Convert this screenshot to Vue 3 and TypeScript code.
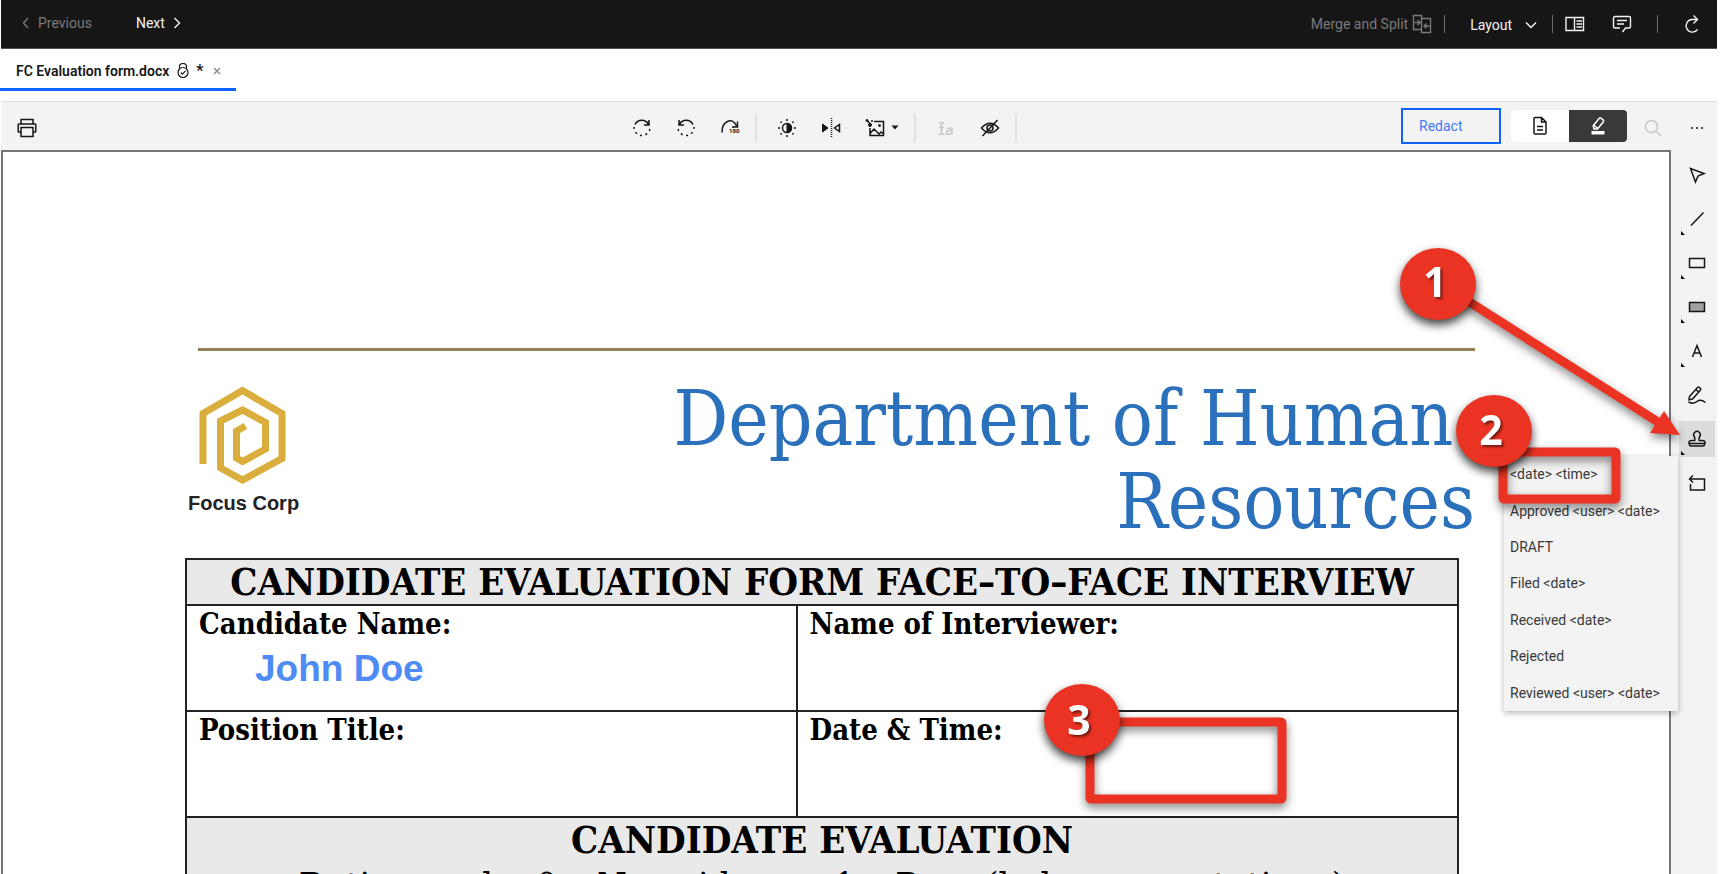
<script setup lang="ts">
import { ref } from 'vue'

interface Tool { id: string; label: string; flyout: boolean }

const tools: Tool[] = [
  { id: 'select', label: 'Select', flyout: false },
  { id: 'line', label: 'Line', flyout: true },
  { id: 'rect', label: 'Rectangle', flyout: true },
  { id: 'fill', label: 'Filled rectangle', flyout: true },
  { id: 'text', label: 'Text', flyout: true },
  { id: 'draw', label: 'Freehand', flyout: false },
  { id: 'stamp', label: 'Stamp', flyout: true },
  { id: 'undo', label: 'Undo', flyout: false },
]

const stamps: string[] = [
  '<date> <time>',
  'Approved <user> <date>',
  'DRAFT',
  'Filed <date>',
  'Received <date>',
  'Rejected',
  'Reviewed <user> <date>',
]

const active = ref('stamp')
</script>

<template>
  <div class="app">
    <header class="topbar">
      <button class="nav dim" disabled>
        <svg width="8" height="12" viewBox="0 0 8 12"><path d="M6 1 1.500 6 6 11" /></svg>
        <span>Previous</span>
      </button>
      <button class="nav next">
        <span>Next</span>
        <svg width="8" height="12" viewBox="0 0 8 12"><path d="M1.500 1 6.500 6l-5 5" /></svg>
      </button>
      <div class="topright">
        <button class="merge dim" disabled>
          <span>Merge and Split</span>
          <svg width="20" height="20" viewBox="0 0 20 20"><path d="M9.500 15.500H1.500v-14h8v3M9.500 4.500h9v14h-9zM2.500 8.500h5M5.500 6l2.500 2.500L5.500 11M17.500 12h-5M14.500 9.500 12 12l2.500 2.500" /></svg>
        </button>
        <i class="bar"></i>
        <button class="layout">
          <span>Layout</span>
          <svg width="12" height="8" viewBox="0 0 12 8"><path d="M1 1.500 6 6.500l5-5" /></svg>
        </button>
        <i class="bar"></i>
        <button class="panel" aria-label="Side panel">
          <svg width="20" height="16" viewBox="0 0 20 16"><path d="M1 1.500h17.500v13H1zM9.500 1.500v13M11.500 5H17M11.500 8H17M11.500 11H17" /></svg>
        </button>
        <button class="comment" aria-label="Comments">
          <svg width="20" height="18" viewBox="0 0 20 18"><path d="M8 13H3q-1.500 0-1.500-1.500V3Q1.500 1.500 3 1.500h14q1.500 0 1.500 1.500v8.500Q18.500 13 17 13h-3.500L10.500 17M5 5.500h10M5 9h7" /></svg>
        </button>
        <i class="bar"></i>
        <button class="redo" aria-label="Refresh">
          <svg width="16" height="20" viewBox="0 0 16 20"><path d="M13.500 15.500A6.300 6.300 0 1 1 8 5.500h5M9.500 1.500l4 4-4 4" /></svg>
        </button>
      </div>
    </header>

    <nav class="tabs">
      <div class="tab">
        <a href="#doc">FC Evaluation form.docx</a>
        <svg class="lock" width="12" height="16" viewBox="0 0 12 16"><circle cx="6" cy="9.500" r="5" /><path d="M2.500 5.500V4a3.500 3.500 0 0 1 7 0v1.500M3.800 9.500l1.700 1.600 3-3.200" /></svg>
        <span class="star">*</span>
        <button class="close" aria-label="Close tab"><svg width="8" height="8" viewBox="0 0 8 8"><path d="M1 1l6 6M7 1 1 7" /></svg></button>
      </div>
    </nav>

    <div class="toolbar">
      <div class="left">
        <button aria-label="Print">
          <svg width="20" height="20" viewBox="0 0 20 20"><path d="M4 6V1.500h12V6M4 14H2q-.8 0-.8-.8V6.800Q1.200 6 2 6h16q.8 0 .8.8v6.400q0 .8-.8.8h-2M4 9.500h12v9H4z" /></svg>
        </button>
      </div>
      <div class="middle">
        <button aria-label="Rotate clockwise">
          <svg width="20" height="20" viewBox="0 0 20 20"><path d="M3 6.500A7.500 7.500 0 0 1 16.500 6.500M17 2v5h-5" /><path stroke-dasharray="2 3.500" d="M2 9a8 8 0 1 0 16 1" /></svg>
        </button>
        <button aria-label="Rotate counterclockwise">
          <svg width="20" height="20" viewBox="0 0 20 20"><path d="M17 6.500A7.500 7.500 0 0 0 3.500 6.500M3 2v5h5" /><path stroke-dasharray="2 3.500" d="M18 9a8 8 0 1 1-16 1" /></svg>
        </button>
        <button aria-label="Rotate 180 degrees">
          <svg width="20" height="20" viewBox="0 0 20 20"><path d="M2 14.500C2 2 13-1 16.500 8M17.500 3.500V9H12" /><text x="9" y="15">180</text></svg>
        </button>
        <i class="sep"></i>
        <button aria-label="Brightness">
          <svg width="20" height="20" viewBox="0 0 20 20"><circle cx="10" cy="10" r="4.500" /><path class="solid" d="M10 5.500a4.500 4.500 0 0 1 0 9z" /><path d="M10 1v2M10 17v2M1 10h2M17 10h2M3.500 3.500l1.200 1.200M15.300 15.300l1.200 1.200M3.500 16.500l1.200-1.200M15.300 4.700l1.200-1.200" /></svg>
        </button>
        <button aria-label="Mirror">
          <svg width="20" height="20" viewBox="0 0 20 20"><path class="solid" d="M1.500 6v8L7 10z" /><path d="M18.500 6.500v7L13.500 10z" /><path stroke-dasharray="1 1" d="M10.500 0v20" /></svg>
        </button>
        <button class="wide" aria-label="Enhance image">
          <svg width="20" height="20" viewBox="0 0 20 20"><path d="M9 3.500h9.500v14H5V10M5.500 15 9 11l5 5 2-2 2.500 2M6 6.500 2.500 3" /><circle class="solid" cx="14.500" cy="7.500" r="1" /><circle class="solid" cx="2" cy="2.500" r="1" /><circle class="solid" cx="5" cy="7" r="1.500" /><circle class="solid" cx="7" cy="3" r=".6" /></svg>
          <svg width="8" height="5" viewBox="0 0 8 5"><path class="solid bare" d="M.5.5h7L4 4.500z" /></svg>
        </button>
        <i class="sep"></i>
        <button class="faint" aria-label="Text select" disabled>
          <svg width="20" height="20" viewBox="0 0 20 20"><path d="M2.500 4.500Q5 4.500 5.500 6 6 4.500 8.500 4.500M2.500 16.500Q5 16.500 5.500 15 6 16.500 8.500 16.500M5.500 6v9M3 9.500h5M11 10.500q3-1 5 0v5.500M16 12.500h-3.500q-2 0-2 2t2 2q2 0 3.500-2" /></svg>
        </button>
        <button aria-label="Hide annotations">
          <svg width="20" height="20" viewBox="0 0 20 20"><path d="M1.500 10Q10 .5 18.500 10 10 19.500 1.500 10zM17.500 2l-15 16" /><circle cx="10" cy="10" r="3" /></svg>
        </button>
        <i class="sep"></i>
      </div>
      <div class="right">
        <button class="redact">Redact</button>
        <div class="switch">
          <button aria-label="Document view">
            <svg width="16" height="20" viewBox="0 0 16 20"><path d="M9.500 1.500H3q-1 0-1 1v14.500q0 1 1 1h10q1 0 1-1V6zM9.500 1.500V6H14M5 10.500h6M5 14h6" /></svg>
          </button>
          <button class="on" aria-label="Annotate view">
            <svg width="16" height="20" viewBox="0 0 16 20"><path d="M4 13 3.200 9.800 9.300 2.300q.8-.8 1.600-.2l2.400 2q.7.8.1 1.600L7.500 13zM4 9.500l4 3" /><path class="white" d="M1.500 15h13v3.500h-13z" /></svg>
          </button>
        </div>
        <button class="faint search" aria-label="Search">
          <svg width="18" height="18" viewBox="0 0 18 18"><circle cx="7.500" cy="7.500" r="6" /><path d="m12 12 5 5" /></svg>
        </button>
        <button class="more" aria-label="More">
          <svg width="14" height="4" viewBox="0 0 14 4"><circle class="solid bare" cx="2" cy="2" r="1" /><circle class="solid bare" cx="7" cy="2" r="1" /><circle class="solid bare" cx="12" cy="2" r="1" /></svg>
        </button>
      </div>
    </div>

    <div class="workspace">
      <main class="viewer">
        <div class="letterhead">
          <div class="brand">
            <svg width="90" height="100" viewBox="0 0 90 100"><path d="M5 79V28.500L44.500 5.500 84 28.500v45L44.500 95l-22-12V36L44.500 25l23 12.500V64l-23 12.500-6-3.500V46l9-5" /></svg>
            <strong>Focus Corp</strong>
          </div>
          <h1>Department of Human&nbsp;<br>Resources</h1>
        </div>
        <div class="formwrap">
          <table class="form">
            <colgroup><col class="first"><col></colgroup>
            <tbody>
              <tr class="title"><th colspan="2">CANDIDATE EVALUATION FORM FACE–TO–FACE INTERVIEW</th></tr>
              <tr><td>Candidate Name:<p class="note">John Doe</p></td><td>Name of Interviewer:</td></tr>
              <tr><td>Position Title:</td><td>Date &amp; Time:</td></tr>
              <tr class="title second"><th colspan="2">CANDIDATE EVALUATION<p>Rating scale: 0= No evidence, 1= Poor (below expectations)</p></th></tr>
            </tbody>
          </table>
        </div>
      </main>

      <aside class="side">
        <div v-for="t in tools" :key="t.id" class="tool" :class="{ active: active === t.id, flyout: t.flyout }">
          <button :aria-label="t.label" @click="active = t.id">
            <svg width="20" height="20" viewBox="0 0 20 20">
              <path v-if="t.id === 'select'" d="M3.500 3.500 17 8.500 11 11 8.500 17z" />
              <path v-else-if="t.id === 'line'" d="M4 16.500 16.500 3.500" />
              <path v-else-if="t.id === 'rect'" d="M2.500 5.500h15v9h-15z" />
              <path v-else-if="t.id === 'fill'" class="grey" d="M2.500 5.500h15v9h-15z" />
              <path v-else-if="t.id === 'text'" d="M5.500 16 10 4.500 14.500 16M7 12h6" />
              <path v-else-if="t.id === 'draw'" d="M2.500 11.500 10.500 2.500q1-.8 2 0l.8.8q.8 1 0 2L5.500 14l-3.500.8zM9 4.500l2.800 2.800M1.500 17q5 2.500 8.500-.5t8.500 1" />
              <path v-else-if="t.id === 'stamp'" d="M7.800 11.500q.8-2-.6-4a3.300 3.300 0 1 1 5.600 0q-1.400 2-.6 4h3q2.800 0 2.800 2v1H2v-1q0-2 2.800-2zM2.500 14.500v1q0 1.500 1.500 1.500h12q1.500 0 1.500-1.500v-1" />
              <path v-else d="M3.500 11v6h14V6h-15M6 2.500 2.500 6 6 9.500" />
            </svg>
          </button>
          <ul v-if="t.id === 'stamp' && active === 'stamp'" class="menu">
            <li v-for="s in stamps" :key="s"><button>{{ s }}</button></li>
          </ul>
        </div>
      </aside>
    </div>

    <svg class="callouts" width="1724" height="874" viewBox="0 0 1724 874">
      <g class="shade">
        <path class="shaft" d="M1460 296 1658 422" />
        <path class="head" d="M1664 411 1650 433 1680 435z" />
      </g>
      <rect class="frame shade" x="1503" y="452" width="113" height="47" rx="1" />
      <rect class="frame shade" x="1090" y="722" width="192" height="77" rx="1" />
      <g class="ball"><ellipse cx="1438" cy="284" rx="38" ry="36" /><ellipse cx="1494" cy="431" rx="38" ry="36" /><ellipse cx="1082" cy="720" rx="38" ry="36" /></g>
      <g class="num"><text x="1435" y="297">1</text><text x="1491" y="445">2</text><text x="1079" y="735">3</text></g>
    </svg>
  </div>
</template>

<style>
body { background: #fff; overflow: hidden; }
</style>

<style scoped>
.app { position: relative; height: 100vh; overflow: hidden; display: flex; flex-direction: column; box-sizing: border-box; padding: 0 7px 0 1px; font: 14px/18px Roboto, "Noto Sans", sans-serif; color: #161616; }
button { font: inherit; color: inherit; background: none; border: 0; padding: 0; display: flex; align-items: center; justify-content: center; }
svg { display: block; fill: none; stroke: currentColor; stroke-width: 1.500; flex: none; }
svg text { stroke: none; fill: currentColor; font: bold 6px Roboto, sans-serif; }
.solid { fill: currentColor; stroke-width: 1; }
.bare { stroke: none; }
.grey { fill: #a0a0a0; }
.white { fill: #fff; stroke: none; }

.topbar { height: 48px; flex: none; display: flex; align-items: center; background: #161616; color: #f4f4f4; border-bottom: 1px solid #525252; padding: 0 17px 0 21px; }
.topbar svg { stroke-width: 1.400; }
.nav { gap: 8px; height: 46px; align-self: flex-start; }
.next { margin-left: 44px; }
.dim { color: #7a7a7a; }
.topright { margin-left: auto; display: flex; align-items: center; }
.merge { gap: 4px; margin-right: 12px; }
.bar { width: 1px; height: 18px; background: #6f6f6f; }
.layout { gap: 13px; margin: 2px 15px 0 25px; }
.panel { margin-left: 12px; }
.comment { margin: 0 25px 0 27px; }
.redo { margin-left: 26px; }

.tabs { height: 52px; flex: none; display: flex; margin-left: -1px; }
.tab { width: 236px; height: 42px; box-sizing: border-box; border-bottom: 3px solid #0f62fe; padding: 5px 0 0 16px; display: flex; align-items: center; font-weight: 600; }
.tab a { color: inherit; text-decoration: none; }
.lock { margin: 0 7px 0 8px; stroke-width: 1.200; }
.star { font-size: 16px; }
.close { margin-left: 10px; color: #8d8d8d; }

.toolbar { height: 48px; flex: none; border-top: 1px solid #e0e0e0; background: #f3f3f3; display: flex; align-items: center; }
.left { width: 36.100%; padding: 3px 0 0 16px; box-sizing: border-box; }
.middle { display: flex; align-items: center; padding-top: 3px; }
.middle button { width: 44px; height: 40px; }
.middle .wide { width: 58px; gap: 6px; }
.sep { width: 2px; height: 28px; margin: 0 8px 0 3px; background: #e0e0e0; }
.faint { color: #c6c6c6; }
.right { margin-left: auto; display: flex; align-items: center; padding-right: 13px; }
.redact { width: 100px; height: 36px; border: 2px solid #0f62fe; color: #4178f5; justify-content: flex-start; padding-left: 16px; margin-right: 10px; }
.switch { display: flex; border-radius: 4px; overflow: hidden; }
.switch button { width: 58px; height: 32px; background: #fff; }
.switch .on { background: #393939; color: #fff; }
.search { margin: 3px 28px 0 17px; }
.more { margin-top: 3px; }

.workspace { flex: 1; min-height: 0; display: flex; background: #f3f3f3; }
.viewer { flex: 1; min-width: 0; overflow: hidden; background: #fff; border: 2px solid #757575; border-bottom: 0; }
.letterhead { margin: 196px 194px 0 195px; border-top: 3px solid #957f54; display: flex; justify-content: space-between; height: 207px; }
.brand { width: 120px; margin-left: -10px; padding-top: 34px; }
.brand svg { stroke: #d9ae3c; stroke-width: 7; margin-left: 10px; }
.brand strong { display: block; font: bold 20px/24px "Liberation Sans", Arial, sans-serif; color: #222; margin-top: 6px; }
h1 { margin: 26px 0 0; font: 400 76px/83px "DejaVu Serif Condensed", "Liberation Serif", serif; color: #2a70bb; text-align: right; white-space: nowrap; }
.formwrap { margin: 0 210px 0 182px; }
.form { width: 100%; border-collapse: collapse; table-layout: fixed; font: bold 29px/36px "DejaVu Serif Condensed", "Liberation Serif", serif; color: #000; }
.first { width: 48%; }
.form td, .form th { border: 2px solid #222; padding: 0; }
.form td { height: 104px; vertical-align: top; padding-left: 12px; }
.title th { height: 44px; font-size: 38px; line-height: 44px; background: #e9e9e9; white-space: nowrap; }
.second p { margin: 0; font-weight: 400; font-size: 38px; line-height: 48px; }
.note { margin: 5px 0 0 56px; font: bold 37px/44px "Liberation Sans", Arial, sans-serif; color: #4f8bf5; }

.side { width: 38px; padding: 7px 0 0 8px; display: flex; flex-direction: column; gap: 8px; }
.tool { position: relative; width: 36px; height: 36px; }
.tool > button { width: 36px; height: 36px; }
.active { background: #dcdcdc; }
.flyout::after { content: ""; position: absolute; left: 2px; bottom: 2px; border: 2px solid transparent; border-left-color: #000; border-bottom-color: #000; }
.menu { position: absolute; right: 37px; top: 35px; width: 174px; height: 255px; margin: 0; padding: 0; list-style: none; display: grid; grid-auto-rows: 1fr; background: #f3f3f3; box-shadow: 0 2px 6px rgba(0, 0, 0, .3); color: #393939; }
.menu li { display: flex; }
.menu button { flex: 1; justify-content: flex-start; padding-left: 6px; white-space: nowrap; }

.callouts { position: absolute; left: 0; top: 0; pointer-events: none; }
.shade { filter: drop-shadow(0 4px 5px rgba(0, 0, 0, .5)); }
.shaft { stroke: #ea3323; stroke-width: 9; }
.head { fill: #ea3323; stroke: none; }
.frame { stroke: #ea3323; stroke-width: 9; stroke-linejoin: round; }
.ball { fill: #ea3323; stroke: none; filter: drop-shadow(0 5px 5px rgba(0, 0, 0, .75)); }
.num { filter: drop-shadow(2px 2px 1px rgba(0, 0, 0, .5)); }
.num text { font: bold 41px "Open Sans", sans-serif; fill: #fff; text-anchor: middle; }
</style>
